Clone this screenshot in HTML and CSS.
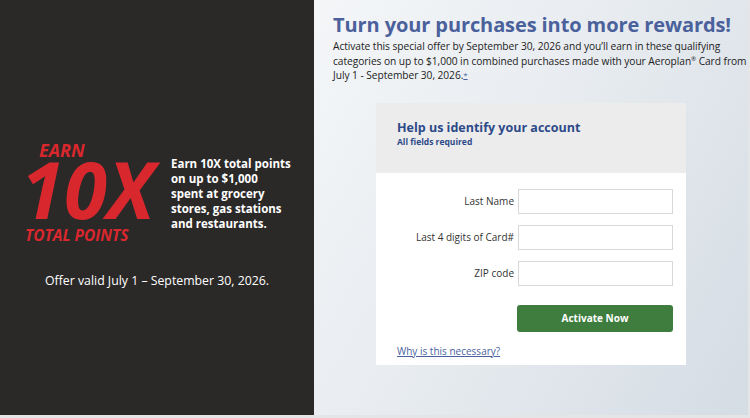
FILE: index.html
```html
<!DOCTYPE html>
<html lang="en">
<head>
    <meta charset="UTF-8">
    <meta name="viewport" content="width=device-width, initial-scale=1.0">
    <title>Activate Offer</title>
    <link rel="stylesheet" href="styles.css">
</head>
<body>

<div class="page">
    <!-- Promo banner -->
    <div class="promo">
        <div class="promo-top">
            <div class="badge">
                <div class="badge-earn">EARN</div>
                <div class="badge-big">10X</div>
                <div class="badge-total">TOTAL POINTS</div>
            </div>
            <div class="promo-text">
                Earn 10X total points<br>on up to $1,000<br>spent at grocery<br>stores, gas stations<br>and restaurants.
            </div>
        </div>
        <div class="promo-valid">Offer valid July 1 – September 30, 2026.</div>
    </div>

    <!-- Activation form -->
    <div class="main">
        <h1>Turn your purchases into more rewards!</h1>
        <p class="intro">Activate this special offer by September 30, 2026 and you’ll earn in these qualifying categories on up to $1,000 in combined purchases made with your Aeroplan<sup>®</sup> Card from July 1 - September 30, 2026.<a href="#" class="note">*</a></p>

        <div class="card">
            <div class="card-head">
                <h2>Help us identify your account</h2>
                <div class="required">All fields required</div>
            </div>
            <div class="card-body">
                <div class="field">
                    <label>Last Name</label>
                    <input type="text">
                </div>
                <div class="field">
                    <label>Last 4 digits of Card#</label>
                    <input type="text">
                </div>
                <div class="field">
                    <label>ZIP code</label>
                    <input type="text">
                </div>
                <div class="field">
                    <button>Activate Now</button>
                </div>
                <a href="#" class="why">Why is this necessary?</a>
            </div>
        </div>
    </div>
</div>

</body>
</html>
```

FILE: styles.css
```css
body {
    margin: 0;
    font-family: "Open Sans", Arial, sans-serif;
    background-color: #e9eaeb;
}
.page {
    display: flex;
    width: 748px;
    height: 415px;
    border-bottom: 3px solid #e4e5e6;
    border-right: 2px solid #e4e5e6;
}
.promo {
    width: 314px;
    background-color: #2b2928;
    color: #fff;
    display: flex;
    flex-direction: column;
    padding-top: 140px;
    box-sizing: border-box;
}
.promo-top {
    display: flex;
    align-items: flex-start;
}
.badge {
    color: #d9272e;
    font-style: italic;
    font-weight: 700;
    width: 145px;
    padding-left: 25px;
    box-sizing: border-box;
}
.badge-earn {
    font-size: 18px;
    padding-left: 14px;
    line-height: 20px;
}
.badge-big {
    font-size: 78px;
    line-height: 58px;
    margin-left: -4px;
}
.badge-total {
    font-size: 15.5px;
    line-height: 24px;
    margin-top: 5px;
}
.promo-text {
    font-weight: 700;
    font-size: 11.5px;
    line-height: 15px;
    padding-top: 16px;
    padding-left: 26px;
    white-space: nowrap;
}
.promo-valid {
    font-size: 12.3px;
    text-align: center;
    margin-top: 25px;
}
.main {
    flex: 1;
    background: linear-gradient(120deg, #f4f6f8 0%, #e8ecf0 45%, #d4dce4 100%);
    padding: 12px 0 0 19px;
}
h1 {
    margin: 0;
    font-size: 20px;
    font-weight: 700;
    color: #4a619c;
    line-height: 26px;
    white-space: nowrap;
    letter-spacing: -0.1px;
}
.intro {
    margin: 1px 0 0;
    font-size: 10.2px;
    line-height: 14.5px;
    letter-spacing: -0.05px;
    color: #222;
}
.intro sup {
    font-size: 6px;
    line-height: 0;
}
.note {
    color: #4a619c;
    font-size: 8px;
    vertical-align: top;
}
.card {
    width: 310px;
    margin: 20px 0 0 43px;
    background-color: #fff;
}
.card-head {
    background-color: #ececed;
    height: 70px;
    padding: 17px 0 0 21px;
    box-sizing: border-box;
}
h2 {
    margin: 0;
    font-size: 12.5px;
    color: #2d4a88;
    line-height: 16px;
}
.required {
    font-size: 8.5px;
    font-weight: 700;
    color: #2d4a88;
    line-height: 12px;
}
.card-body {
    padding: 16px 13px 7px 21px;
}
.field {
    display: flex;
    align-items: center;
    justify-content: flex-end;
    margin-bottom: 11px;
}
.field label {
    font-size: 10px;
    color: #333;
    margin-right: 4px;
}
.field input {
    width: 155px;
    height: 25px;
    box-sizing: border-box;
    border: 1px solid #d8d8d8;
    padding: 4px;
}
button {
    width: 156px;
    height: 27px;
    margin-top: 8px;
    margin-bottom: 1px;
    background-color: #3e7d3e;
    color: #fff;
    border: none;
    border-radius: 3px;
    font-family: "Open Sans", Arial, sans-serif;
    font-weight: 700;
    font-size: 10px;
    cursor: pointer;
}
.why {
    display: block;
    font-size: 10px;
    color: #4b5fa0;
    line-height: 14px;
}
```
